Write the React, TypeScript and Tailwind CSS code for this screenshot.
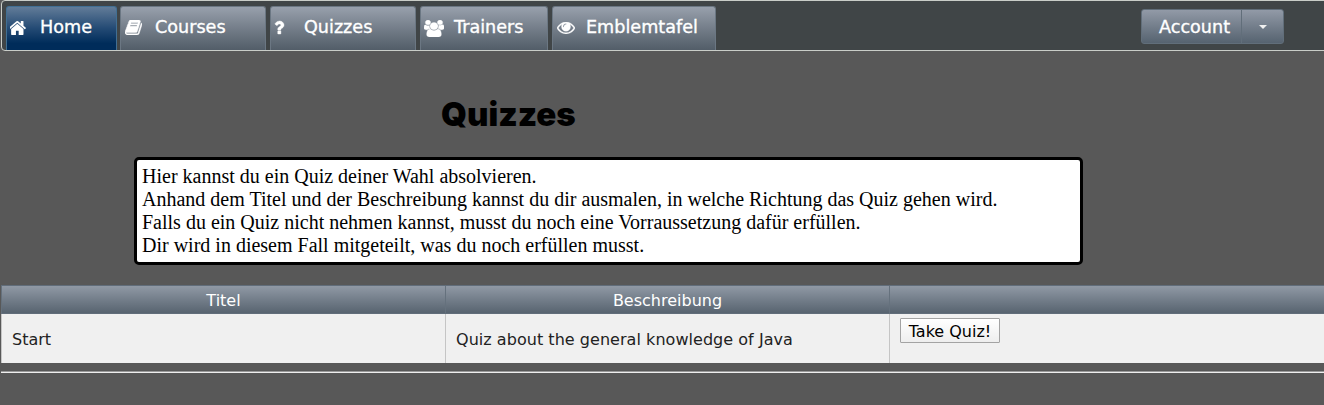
import type { ReactNode } from 'react';

type IconProps = { viewBox: string; d: string; className: string };

function Icon({ viewBox, d, className }: IconProps) {
  return (
    <svg viewBox={viewBox} preserveAspectRatio="none" fill="currentColor" className={className} aria-hidden="true">
      <path d={d} />
    </svg>
  );
}

const HOME =
  'M1408 992v480q0 26-19 45t-45 19h-384v-384h-256v384h-384q-26 0-45-19t-19-45v-480q0-1 .5-3t.5-3l575-474 575 474q1 2 1 6zm223-69l-62 74q-8 9-21 11h-3q-13 0-21-7l-692-577-692 577q-12 8-24 7-13-2-21-11l-62-74q-8-10-7-23.5t11-21.5l719-599q32-26 76-26t76 26l244 204v-195q0-14 9-23t23-9h192q14 0 23 9t9 23v408l219 182q10 8 11 21.5t-7 23.5z';
const BOOK =
  'M1703 478q40 57 18 129l-275 906q-19 64-76.5 107.5t-122.5 43.5h-923q-77 0-148.5-53.5t-99.5-131.5q-24-67-2-127 0-4 3-27t4-37q1-8-3-21.5t-3-19.5q2-11 8-21t16.5-23.5 16.5-23.5q23-38 45-91.5t30-91.5q3-10 .5-30t-.5-28q3-11 17-28t17-23q21-36 42-92t25-90q1-9-2.5-32t.5-28q4-13 22-30.5t22-22.5q19-26 42.5-84.5t27.5-96.5q1-8-3-25.5t-2-26.5q2-8 9-18t18-23 17-21q8-12 16.5-30.5t15-35 16-36 19.5-32 26.5-23.5 36-11.5 47.5 5.5l-1 3q38-9 51-9h761q74 0 114 56t18 130l-274 906q-36 119-71.5 153.5t-128.5 34.5h-869q-27 0-38 15-11 16-1 43 24 70 144 70h923q29 0 56-15.5t35-41.5l300-987q7-22 5-57 38 15 59 43zm-1064 2q-4 13 2 22.5t20 9.5h608q13 0 25.5-9.5t16.5-22.5l21-64q4-13-2-22.5t-20-9.5h-608q-13 0-25.5 9.5t-16.5 22.5zm-83 256q-4 13 2 22.5t20 9.5h608q13 0 25.5-9.5t16.5-22.5l21-64q4-13-2-22.5t-20-9.5h-608q-13 0-25.5 9.5t-16.5 22.5z';
const QUESTION =
  'M1088 1256v240q0 16-12 28t-28 12h-240q-16 0-28-12t-12-28v-240q0-16 12-28t28-12h240q16 0 28 12t12 28zm316-600q0 54-15.5 101t-35 76.5-55 59.5-57.5 43.5-61 35.5q-41 23-68.5 65t-27.5 67q0 17-12 32.5t-28 15.5h-240q-15 0-25.5-18.5t-10.5-37.5v-45q0-83 65-156.5t143-108.5q59-27 84-56t25-76q0-42-46.5-74t-107.5-32q-65 0-108 29-35 25-107 115-13 16-31 16-12 0-25-8l-164-125q-13-10-15.5-25t5.5-28q160-266 464-266 80 0 161 31t146 83 106 127.5 41 158.5z';
const EYE =
  'M1664 960q-152-236-381-353 61 104 61 225 0 185-131.5 316.5t-316.5 131.5-316.5-131.5-131.5-316.5q0-121 61-225-229 117-381 353 133 205 333.5 326.5t434.5 121.5 434.5-121.5 333.5-326.5zm-720-384q0-20-14-34t-34-14q-125 0-214.5 89.5t-89.5 214.5q0 20 14 34t34 14 34-14 14-34q0-86 61-147t147-61q20 0 34-14t14-34zm848 384q0 34-20 69-140 230-376.5 368.5t-499.5 138.5-499.5-139-376.5-368q-20-35-20-69t20-69q140-229 376.5-368t499.5-139 499.5 139 376.5 368q20 35 20 69z';
const USERS =
  'M593 896q-162 5-265 128h-134q-82 0-138-40.5t-56-118.5q0-353 124-353 6 0 43.5 21t97.5 42.5 119 21.5q67 0 133-23-5 37-5 66 0 159 93 293zm1071 637q0 120-73 189.5t-194 69.5h-874q-121 0-194-69.5t-73-189.5q0-53 3.5-103.5t14-109 26.5-108.5 43-97.5 62-81 85.5-53.5 111.5-20q10 0 43 21.5t73 48 107 48 135 21.5 135-21.5 107-48 73-48 43-21.5q61 0 111.5 20t85.5 53.5 62 81 43 97.5 26.5 108.5 14 109 3.5 103.5zm-1024-1277q0 106-75 181t-181 75-181-75-75-181 75-181 181-75 181 75 75 181zm704 384q0 159-112.5 271.5t-271.5 112.5-271.5-112.5-112.5-271.5 112.5-271.5 271.5-112.5 271.5 112.5 112.5 271.5zm576 225q0 78-56 118.5t-138 40.5h-134q-103-123-265-128 93-134 93-293 0-29-5-66 66 23 133 23 59 0 119-21.5t97.5-42.5 43.5-21q124 0 124 353zm-128-609q0 106-75 181t-181 75-181-75-75-181 75-181 181-75 181 75 75 181z';

function Tab({ className, icon, label }: { className: string; icon: ReactNode; label: ReactNode }) {
  return (
    <a
      href="#"
      className={`flex h-11 shrink-0 items-start rounded-t-[3px] border border-b-0 pl-[3px] text-white ${className}`}
    >
      {icon}
      {label}
    </a>
  );
}

const gray = 'border-[#6b7783] bg-linear-to-b from-[#98a0ac] to-[#525d68]';
const labelBase = 'mt-[9px] text-[17.6px] leading-[22px] whitespace-nowrap [-webkit-text-stroke:0.35px_white]';

export default function App() {
  return (
    <div className="h-[405px] w-full overflow-hidden bg-[#585858] pl-px font-['DejaVu_Sans',sans-serif]">
      <nav className="flex h-[51px] w-[1340px] rounded-[4px] border border-[#c9cdc8] bg-[#404547] pt-[5px] pl-1">
        <Tab
          className="mr-[3px] w-[111px] border-[#416f93] bg-linear-to-b from-[#627c98] from-0% via-[#234a74] via-50% to-[#002c5a] to-85%"
          icon={<Icon viewBox="149 253 1494 1283" d={HOME} className="mt-[14px] h-[14px] w-4" />}
          label={<span className={`${labelBase} ml-[14px]`}>Home</span>}
        />
        <Tab
          className={`mr-1 w-[146px] ${gray}`}
          icon={
            <Icon
              viewBox="64 128 1664 1536"
              d={BOOK}
              className="mt-[13px] ml-px h-[15px] w-[17px] stroke-white [stroke-width:50]"
            />
          }
          label={<span className={`${labelBase} ml-[13px]`}>Courses</span>}
        />
        <Tab
          className={`mr-1 w-[146px] ${gray}`}
          icon={
            <Icon
              viewBox="386 256 1018 1280"
              d={QUESTION}
              className="mt-[14px] h-[13px] w-[10px] overflow-visible stroke-white [stroke-width:40]"
            />
          }
          label={<span className={`${labelBase} ml-[20px]`}>Quizzes</span>}
        />
        <Tab
          className={`mr-1 w-32 ${gray}`}
          icon={<Icon viewBox="0 0 1920 1792" d={USERS} className="mt-[13px] h-[17px] w-5 stroke-white [stroke-width:30]" />}
          label={<span className={`${labelBase} ml-[10px]`}>Trainers</span>}
        />
        <Tab
          className={`w-[164px] ${gray}`}
          icon={<Icon viewBox="0 384 1792 1152" d={EYE} className="mt-[15px] ml-px h-3 w-[18px] stroke-white [stroke-width:30]" />}
          label={<span className={`${labelBase} ml-[11px]`}>Emblemtafel</span>}
        />
        <div className="mt-[3px] ml-[425px] flex h-[35px] w-[143px] rounded-[3px] border border-[#616e7a] bg-linear-to-b from-[#929aa7] to-[#566370] text-white">
          <button className="flex w-[100px] items-start border-r border-[#616e7a] pl-[17px]">
            <span className="mt-[6px] text-[17.6px] leading-[22px] [-webkit-text-stroke:0.35px_white]">Account</span>
          </button>
          <button className="flex flex-1 items-center justify-center">
            <svg viewBox="0 0 8 4" className="h-1 w-2" fill="#f0f0f0">
              <path d="M0 0h8L4 4z" />
            </svg>
          </button>
        </div>
      </nav>

      <h1 className="mt-[39px] ml-[440px] h-[67px] font-['Inter',sans-serif] text-[33px] leading-[48px] font-black text-black">
        Quizzes
      </h1>

      <div className="ml-[133px] h-[108px] w-[949px] rounded-[5px] border-3 border-black bg-white p-[5px] font-['Liberation_Serif',serif] text-[20px] leading-[23px] whitespace-nowrap text-black">
        <p>Hier kannst du ein Quiz deiner Wahl absolvieren.</p>
        <p>Anhand dem Titel und der Beschreibung kannst du dir ausmalen, in welche Richtung das Quiz gehen wird.</p>
        <p>Falls du ein Quiz nicht nehmen kannst, musst du noch eine Vorraussetzung dafür erfüllen.</p>
        <p>Dir wird in diesem Fall mitgeteilt, was du noch erfüllen musst.</p>
      </div>

      <div className="mt-5 w-[1332px] text-[16px]">
        <div className="grid h-[29px] grid-cols-3 border-y border-[#616d7a] bg-linear-to-b from-[#9099a5] to-[#586470] text-center leading-[29px] text-white">
          <div className="border-l border-[#65717d]">Titel</div>
          <div className="h-[27px] border-l border-[#65717d]">Beschreibung</div>
          <div className="border-l border-[#65717d]" />
        </div>
        <div className="grid h-[49px] grid-cols-3 bg-[#f0f0f0] text-[#222]">
          <div className="h-[49px] border-l border-[#c5c5c5] pt-px pl-[10px] leading-[50px]">Start</div>
          <div className="h-[49px] border-l border-[#c5c5c5] pt-px pl-[10px] leading-[50px] tracking-[0.04px]">
            Quiz about the general knowledge of Java
          </div>
          <div className="h-[49px] border-l border-[#c5c5c5] pt-1 pl-[10px]">
            <button className="block h-[25px] w-[100px] rounded-[1px] border border-[#a3a3a3] bg-linear-to-b from-white to-[#eeeeee] leading-[25px] whitespace-nowrap text-black">
              Take Quiz!
            </button>
          </div>
        </div>
      </div>
      <hr className="mt-2 h-[2px] border-t border-b border-t-[#9a9a9a] border-b-[#eeeeee]" />
    </div>
  );
}
